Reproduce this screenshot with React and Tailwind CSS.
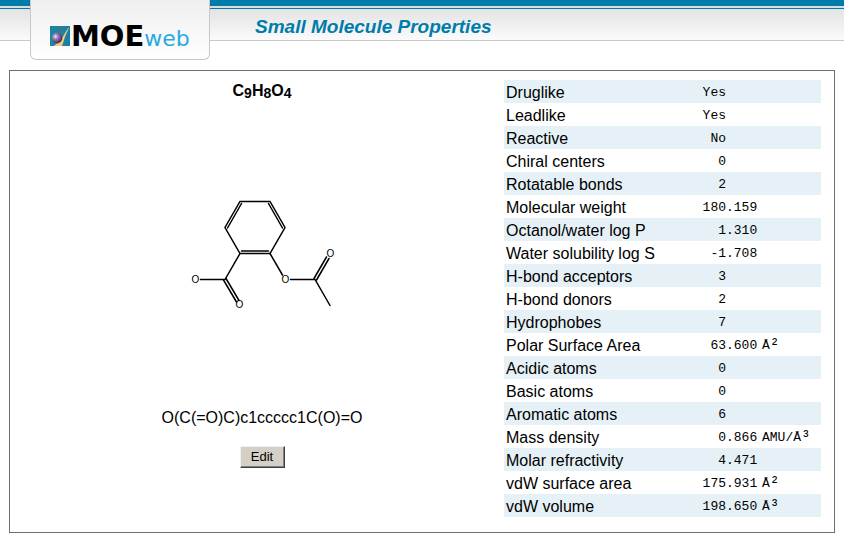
const properties = [
  { name: 'Druglike', whole: 'Yes' },
  { name: 'Leadlike', whole: 'Yes' },
  { name: 'Reactive', whole: 'No' },
  { name: 'Chiral centers', whole: '0' },
  { name: 'Rotatable bonds', whole: '2' },
  { name: 'Molecular weight', whole: '180', fraction: '.159' },
  { name: 'Octanol/water log P', whole: '1', fraction: '.310' },
  { name: 'Water solubility log S', whole: '-1', fraction: '.708' },
  { name: 'H-bond acceptors', whole: '3' },
  { name: 'H-bond donors', whole: '2' },
  { name: 'Hydrophobes', whole: '7' },
  { name: 'Polar Surface Area', whole: '63', fraction: '.600', unit: 'Å', power: '²' },
  { name: 'Acidic atoms', whole: '0' },
  { name: 'Basic atoms', whole: '0' },
  { name: 'Aromatic atoms', whole: '6' },
  { name: 'Mass density', whole: '0', fraction: '.866', unit: 'AMU/Å', power: '³' },
  { name: 'Molar refractivity', whole: '4', fraction: '.471' },
  { name: 'vdW surface area', whole: '175', fraction: '.931', unit: 'Å', power: '²' },
  { name: 'vdW volume', whole: '198', fraction: '.650', unit: 'Å', power: '³' },
];

function Logo() {
  return (
    <div className="flex h-[60px] w-[180px] items-start rounded-b-md border border-t-0 border-[#c8c8c8] bg-linear-to-b from-[#efefef] to-white pt-[26px] pl-[19px]">
      <svg width="20" height="20" viewBox="0 0 20 20" aria-hidden="true" className="shrink-0">
        <defs>
          <linearGradient id="tile" x1="0" y1="0" x2="1" y2="0">
            <stop offset="0" stopColor="#1787a8" />
            <stop offset="0.6" stopColor="#2b7f93" />
            <stop offset="1" stopColor="#0a83b4" />
          </linearGradient>
          <radialGradient id="ball" cx="0.36" cy="0.36" r="0.65">
            <stop offset="0" stopColor="#f0e8f8" />
            <stop offset="0.35" stopColor="#9a86b8" />
            <stop offset="1" stopColor="#3d2865" />
          </radialGradient>
        </defs>
        <rect width="20" height="20" fill="url(#tile)" />
        <path d="M19.500 1C14.500 6 14 11 9.500 14.500L4 20H12C14 14.500 15.500 8 19.500 1Z" fill="#f6c978" />
        <circle cx="7" cy="12" r="5.4" fill="url(#ball)" />
      </svg>
      <div className="flex items-baseline pl-px font-['DejaVu_Sans',sans-serif]">
        <span className="text-[29px] leading-5 font-bold text-black">MOE</span>
        <span className="text-[22px] leading-5 text-[#2aa9e0]">web</span>
      </div>
    </div>
  );
}

function Header() {
  return (
    <header className="h-[60px]">
      <div className="h-[41px] border-b border-[#c8c8c8] bg-linear-to-b from-[#dcdcdc] to-[#fbfbfb]">
        <div className="h-[6px] bg-[#007caa]" />
        <div className="h-[2px] bg-[#dcdcdc]" />
        <div className="h-px bg-[#007caa]" />
        <div className="-mt-[9px] flex pl-[30px]">
          <Logo />
          <h1 className="pt-[15px] pl-[45px] text-[19px] leading-6 font-bold italic text-[#007caa]">
            Small Molecule Properties
          </h1>
        </div>
      </div>
    </header>
  );
}

function Molecule() {
  return (
    <svg
      width="170"
      height="130"
      viewBox="177 190 170 130"
      role="img"
      aria-label="Structure diagram"
      fill="none"
      stroke="#000"
      strokeWidth="1.5"
      strokeLinecap="round"
    >
      <path d="M240 201.500H270L285 227.500L270 253.500H240L225 227.500Z" />
      <path d="M241.500 203.500L227.500 228M268.500 203.500L282.500 228M241.500 251H268.500" />
      <path d="M240 253.500L225 279.500H200.500" />
      <path d="M226 278.500L239 300.500M223.500 280L236.500 302" />
      <path d="M270 253.500L282.500 275M290.500 279.500H315L330 305.500" />
      <path d="M314 278.500L326.500 257M316.500 280L329 258.500" />
      <g fill="#000" stroke="none" fontSize="10" textAnchor="middle" className="font-['Liberation_Sans',Arial,sans-serif]">
        <text x="195.500" y="282.500">O</text>
        <text x="239.500" y="308">O</text>
        <text x="285.500" y="282.500">O</text>
        <text x="330.500" y="257">O</text>
      </g>
    </svg>
  );
}

export default function App() {
  return (
    <div className="bg-white font-['Liberation_Sans',Arial,sans-serif] text-base text-black">
      <Header />
      <main className="mx-[9px] mt-[10px] flex border border-[#716f64] pt-[9px] pr-[13px] pb-[15px] pl-[10px]">
        <section className="flex flex-1 flex-col items-center pt-px">
          <h2 className="leading-5 font-bold">
            C<span className="relative top-[2px] text-sm">9</span>H
            <span className="relative top-[2px] text-sm">8</span>O
            <span className="relative top-[2px] text-sm">4</span>
          </h2>
          <div className="mt-[89px]">
            <Molecule />
          </div>
          <p className="mt-[88px] leading-5">O(C(=O)C)c1ccccc1C(O)=O</p>
          <button
            type="button"
            className="mt-[18px] h-[22px] w-[45px] border border-t-[#f4f2ee] border-r-[#404040] border-b-[#404040] border-l-[#f4f2ee] bg-[#d4d0c8] text-[13px] leading-5 shadow-[inset_-1px_-1px_0_#808080]"
          >
            Edit
          </button>
        </section>
        <table className="w-[317px] border-collapse">
          <tbody>
            {properties.map((p) => (
              <tr key={p.name} className="h-[23px] odd:bg-[#e5f1f6]">
                <th scope="row" className="w-[198px] p-0 pt-[2px] pl-[2px] text-left leading-[21px] font-normal">
                  {p.name}
                </th>
                <td className="p-0 pt-[2px] font-['Liberation_Mono','Courier_New',monospace] text-[13px] leading-[21px]">
                  <div className="flex">
                    <span className="w-6 text-right">{p.whole}</span>
                    <span className="w-9">{p.fraction}</span>
                    <span>
                      {p.unit}
                      <span className="text-base leading-4">{p.power}</span>
                    </span>
                  </div>
                </td>
              </tr>
            ))}
          </tbody>
        </table>
      </main>
    </div>
  );
}
